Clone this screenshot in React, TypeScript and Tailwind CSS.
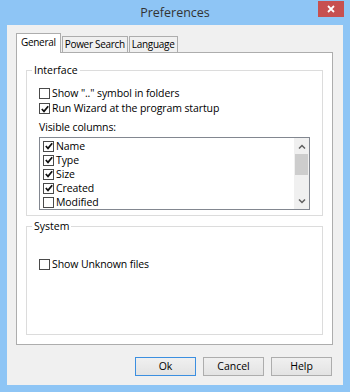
import { useState } from "react";

const font = { fontFamily: '"Open Sans", "Noto Sans", sans-serif' };

interface checkProps {
  label: string;
  checked: boolean;
  onToggle: () => void;
}

const CheckBox = ({ label, checked, onToggle }: checkProps) => {
  return (
    <div className="flex items-center h-[15px] cursor-default" onClick={onToggle}>
      <span className="w-[11px] h-[11px] border border-[#4a4a4a] bg-white flex items-center justify-center shrink-0">
        {checked && (
          <svg width="8" height="8" viewBox="0 0 8 8">
            <path d="M0.8 4 L3 6.4 L7.2 1.2" fill="none" stroke="#111" strokeWidth="1.7" />
          </svg>
        )}
      </span>
      <span className="ml-[2px] text-[10.5px] leading-[15px] text-black whitespace-nowrap tracking-[-0.1px]">{label}</span>
    </div>
  );
};

const App = () => {
  const [showDots, setShowDots] = useState(false);
  const [runWizard, setRunWizard] = useState(true);
  const [unknown, setUnknown] = useState(false);
  const [cols, setCols] = useState<Record<string, boolean>>({
    Name: true,
    Type: true,
    Size: true,
    Created: true,
    Modified: false,
  });
  const tabs = ["General", "Power Search", "Language"];

  return (
    <div className="w-[350px] h-[392px] bg-[#8ec5f5] flex flex-col" style={font}>
      {/* title bar */}
      <div className="h-[25px] flex items-start relative">
        <div className="flex-1 text-center text-[12.5px] leading-[26px] text-[#333]">Preferences</div>
        <div className="absolute right-[6px] top-[1px] w-[26px] h-[16px] bg-[#c75050] flex items-center justify-center">
          <svg width="8" height="8" viewBox="0 0 8 8">
            <path d="M1 1 L7 7 M7 1 L1 7" stroke="white" strokeWidth="1.8" />
          </svg>
        </div>
      </div>

      {/* client */}
      <div className="mx-[7px] h-[360px] bg-[#f0f0f0] flex flex-col pl-[9px] pr-[10px] pt-[8px]">
        {/* tabs */}
        <div className="flex items-end h-[19px]">
          {tabs.map((t, i) => (
            <div
              key={t}
              className={
                i === 0
                  ? "h-[20px] px-[4px] bg-white border border-b-0 border-[#adadad] text-[10px] tracking-[-0.3px] leading-[17px] relative z-10 -mb-[1px]"
                  : "h-[16px] px-[2px] bg-[#f0f0f0] border border-b-0 border-[#adadad] text-[10px] tracking-[-0.3px] leading-[15px] ml-[1px]"
              }
            >
              {t}
            </div>
          ))}
        </div>

        {/* tab panel */}
        <div className="h-[293px] bg-white border border-[#adadad] px-[9px] flex flex-col">
          <fieldset className="border border-[#dcdcdc] mt-[10px] px-[12px] h-[153px]">
            <legend className="ml-[-7px] px-[2px] text-[10.5px] leading-[15px]">Interface</legend>
            <div className="mt-[8px] flex flex-col">
              <CheckBox label={'Show ".." symbol in folders'} checked={showDots} onToggle={() => setShowDots(!showDots)} />
              <CheckBox label="Run Wizard at the program startup" checked={runWizard} onToggle={() => setRunWizard(!runWizard)} />
              <div className="text-[10.5px] leading-[15px] mt-[4px] tracking-[-0.1px]">Visible columns:</div>
              <div className="mt-[2px] h-[73px] border border-[#828790] flex">
                <div className="flex-1 pt-[1px] pl-[3px] flex flex-col">
                  {Object.keys(cols).map((c) => (
                    <div key={c} className="h-[14px] flex items-center">
                      <CheckBox label={c} checked={cols[c]} onToggle={() => setCols({ ...cols, [c]: !cols[c] })} />
                    </div>
                  ))}
                </div>
                <div className="w-[15px] bg-[#f0f0f0] flex flex-col items-center">
                  <div className="h-[16px] flex items-center justify-center">
                    <svg width="8" height="5" viewBox="0 0 8 5">
                      <path d="M1 4.5 L4 1.5 L7 4.5" fill="none" stroke="#606060" strokeWidth="1.5" />
                    </svg>
                  </div>
                  <div className="w-[13px] h-[21px] bg-[#cdcdcd]" />
                  <div className="flex-1" />
                  <div className="h-[16px] flex items-center justify-center">
                    <svg width="8" height="5" viewBox="0 0 8 5">
                      <path d="M1 0.5 L4 3.5 L7 0.5" fill="none" stroke="#606060" strokeWidth="1.5" />
                    </svg>
                  </div>
                </div>
              </div>
            </div>
          </fieldset>

          <fieldset className="border border-[#dcdcdc] mt-[3px] px-[12px] h-[116px]">
            <legend className="ml-[-7px] px-[2px] text-[10.5px] leading-[15px]">System</legend>
            <div className="mt-[23px]">
              <CheckBox label="Show Unknown files" checked={unknown} onToggle={() => setUnknown(!unknown)} />
            </div>
          </fieldset>
        </div>

        {/* buttons */}
        <div className="flex justify-end gap-[7px] mt-[12px] mr-[1px]">
          {["Ok", "Cancel", "Help"].map((b, i) => (
            <button
              key={b}
              className={
                "w-[61px] h-[19px] text-[10.5px] leading-[17px] bg-gradient-to-b from-[#f0f0f0] to-[#e3e3e3] border " +
                (i === 0 ? "border-[#3c8fe0]" : "border-[#adadad]")
              }
            >
              {b}
            </button>
          ))}
        </div>
      </div>
    </div>
  );
};

export default App;
